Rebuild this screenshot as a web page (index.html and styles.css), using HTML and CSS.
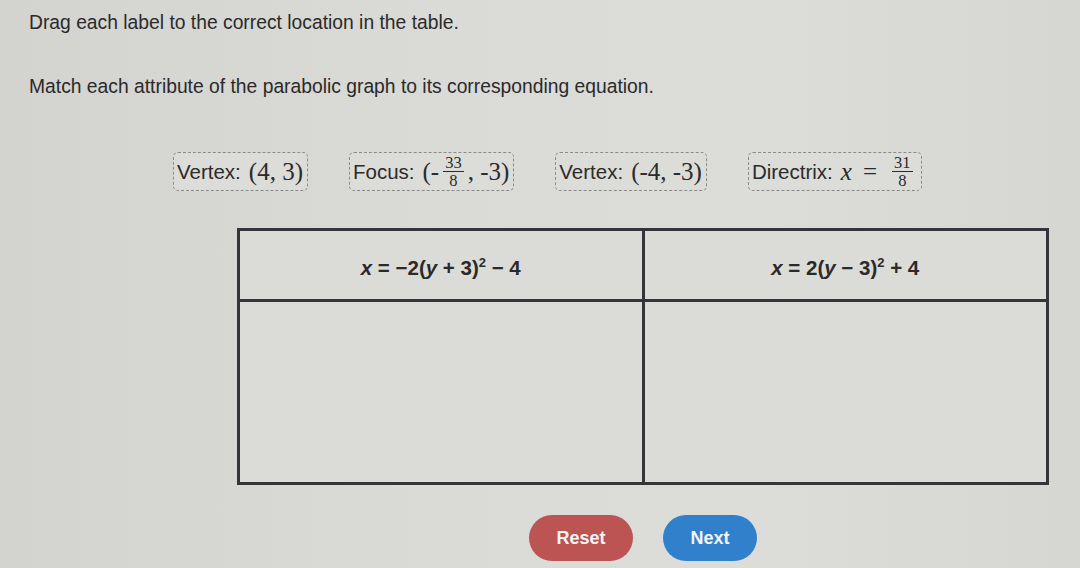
FILE: index.html
```html
<!DOCTYPE html>
<html lang="en">
<head>
  <meta charset="UTF-8" />
  <title>Drag and Drop</title>
  <link rel="stylesheet" href="styles.css">
</head>
<body>
  <div class="page">
    <p class="prompt first">Drag each label to the correct location in the table.</p>
    <p class="prompt second">Match each attribute of the parabolic graph to its corresponding equation.</p>

    <div class="labels">
      <div class="tile">Vertex: <span class="math">(4, 3)</span></div>
      <div class="tile">Focus: <span class="math">(-<span class="frac"><span class="num">33</span><span class="den">8</span></span>, -3)</span></div>
      <div class="tile">Vertex: <span class="math">(-4, -3)</span></div>
      <div class="tile">Directrix: <span class="math"><i>x</i><span class="eq">=</span><span class="frac"><span class="num">31</span><span class="den">8</span></span></span></div>
    </div>

    <table class="drop-table">
      <tr class="head">
        <th><i>x</i> = &minus;2(<i>y</i> + 3)<sup>2</sup> &minus; 4</th>
        <th><i>x</i> = 2(<i>y</i> &minus; 3)<sup>2</sup> + 4</th>
      </tr>
      <tr class="drop">
        <td></td>
        <td></td>
      </tr>
    </table>

    <div class="actions">
      <button class="btn reset">Reset</button>
      <button class="btn next">Next</button>
    </div>
  </div>
</body>
</html>
```

FILE: styles.css
```css
body {
  margin: 0;
  background: #d8d8d4;
  color: #2a2a2a;
  font-family: "Liberation Sans", Arial, sans-serif;
}

.page {
  width: 1080px;
  height: 568px;
  overflow: hidden;
  background: linear-gradient(90deg, #d3d3cf 0%, #dadad6 40%, #dcdcd8 70%, #d6d6d2 100%);
}

.prompt {
  margin: 0;
  padding-left: 29px;
  font-size: 19.3px;
  line-height: 22px;
}

.prompt.first {
  padding-top: 12px;
}

.prompt.second {
  padding-top: 42px;
}

.labels {
  display: flex;
  align-items: center;
  gap: 41px;
  margin: 54px 0 0 173px;
}

.tile {
  display: flex;
  align-items: center;
  gap: 8px;
  height: 37px;
  padding: 0 4px 0 3px;
  border: 1.5px dashed #8a8a88;
  border-radius: 5px;
  background: #dcdcd8;
  font-size: 20.5px;
  color: #2b2b2b;
}

.math {
  display: inline-flex;
  align-items: center;
  font-family: "Liberation Serif", "Times New Roman", serif;
  font-size: 25px;
}

.math .eq {
  margin: 0 11px;
}

.frac {
  display: inline-flex;
  flex-direction: column;
  align-items: center;
  font-size: 16.5px;
  line-height: 15px;
  margin: 0 4px;
}

.frac .num {
  border-bottom: 1.5px solid #2b2b2b;
  padding: 0 2px 1px;
}

.frac .den {
  padding-top: 1px;
}

.drop-table {
  margin: 37px 0 0 237px;
  width: 812px;
  border-collapse: collapse;
  table-layout: fixed;
}

.drop-table th,
.drop-table td {
  border: 3px solid #34343a;
  background: #dbdbd7;
}

.drop-table th {
  height: 61px;
  padding-top: 6px;
  font-size: 20.5px;
  font-weight: bold;
  color: #2a2a2a;
}

.drop-table th sup {
  font-size: 13px;
  line-height: 0;
}

.drop-table td {
  height: 178px;
}

.actions {
  display: flex;
  justify-content: center;
  gap: 30px;
  margin: 30px 0 0 237px;
  width: 812px;
}

.btn {
  height: 46px;
  border: none;
  border-radius: 23px;
  font-family: "Liberation Sans", Arial, sans-serif;
  font-size: 18px;
  font-weight: bold;
  color: #f4f4f4;
}

.btn.reset {
  width: 104px;
  background: #bb5452;
}

.btn.next {
  width: 94px;
  background: #3180cc;
}
```
